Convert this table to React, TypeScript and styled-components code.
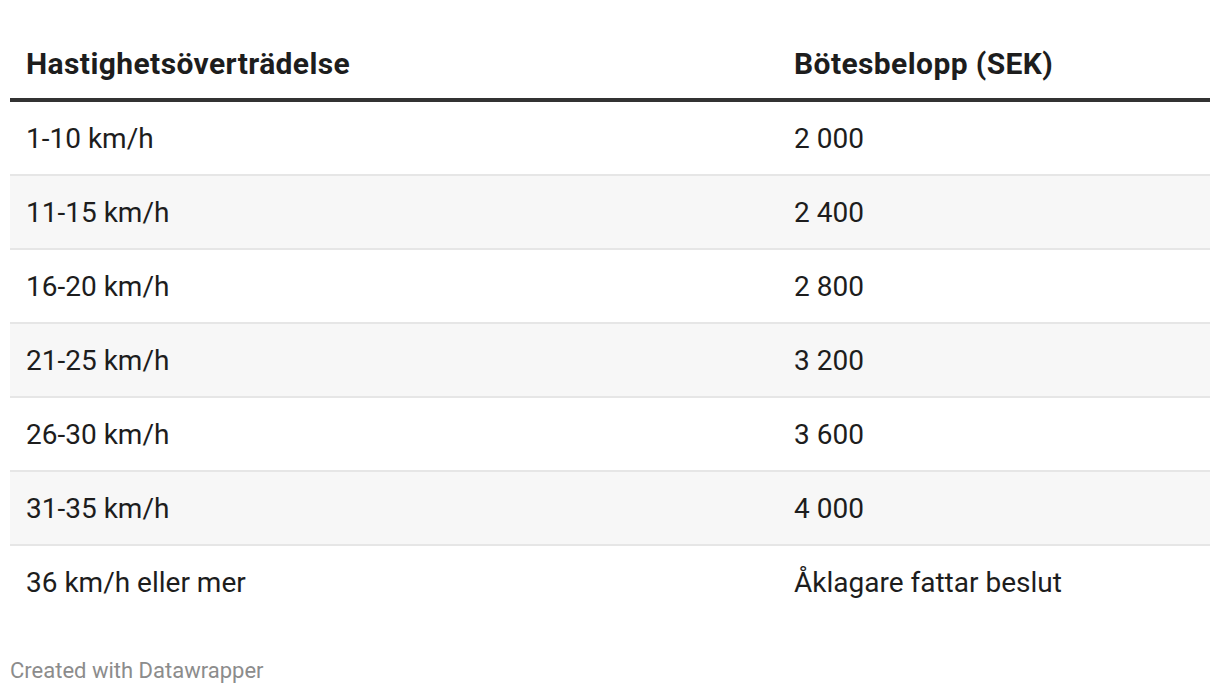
import React from "react";
import styled, { createGlobalStyle } from "styled-components";

const Global = createGlobalStyle`
  html, body { margin: 0; padding: 0; background: #ffffff; }
  body { font-family: Roboto, "Liberation Sans", Arial, sans-serif; -webkit-font-smoothing: antialiased; }
`;

const Wrap = styled.div`
  width: 1200px;
  padding: 28px 10px 0 10px;
`;

const Table = styled.div`
  display: grid;
  grid-template-columns: 768px 1fr;
`;

const HeadCell = styled.div`
  font-size: 30px;
  font-weight: 700;
  letter-spacing: 0.4px;
  color: #1d1d1d;
  line-height: 34px;
  padding: 19px 16px 17px 16px;
  border-bottom: 4px solid #333333;
`;

const Cell = styled.div<{ $alt: boolean; $last: boolean }>`
  font-size: 28px;
  font-weight: 400;
  color: #1d1d1d;
  line-height: 34px;
  padding: 20px 16px 18px 16px;
  background: ${(p) => (p.$alt ? "#f7f7f7" : "#ffffff")};
  border-bottom: ${(p) => (p.$last ? "none" : "2px solid #e6e6e6")};
`;

const Footer = styled.div`
  margin-top: 40px;
  font-size: 22px;
  line-height: 26px;
  color: #8c8c8c;
`;

const rows: [string, string][] = [
  ["1-10 km/h", "2 000"],
  ["11-15 km/h", "2 400"],
  ["16-20 km/h", "2 800"],
  ["21-25 km/h", "3 200"],
  ["26-30 km/h", "3 600"],
  ["31-35 km/h", "4 000"],
  ["36 km/h eller mer", "Åklagare fattar beslut"],
];

export default function App() {
  return (
    <>
      <Global />
      <Wrap>
        <Table>
          <HeadCell>Hastighetsöverträdelse</HeadCell>
          <HeadCell>Bötesbelopp (SEK)</HeadCell>
          {rows.map(([a, b], i) => (
            <React.Fragment key={i}>
              <Cell $alt={i % 2 === 1} $last={i === rows.length - 1}>{a}</Cell>
              <Cell $alt={i % 2 === 1} $last={i === rows.length - 1}>{b}</Cell>
            </React.Fragment>
          ))}
        </Table>
        <Footer>Created with Datawrapper</Footer>
      </Wrap>
    </>
  );
}
